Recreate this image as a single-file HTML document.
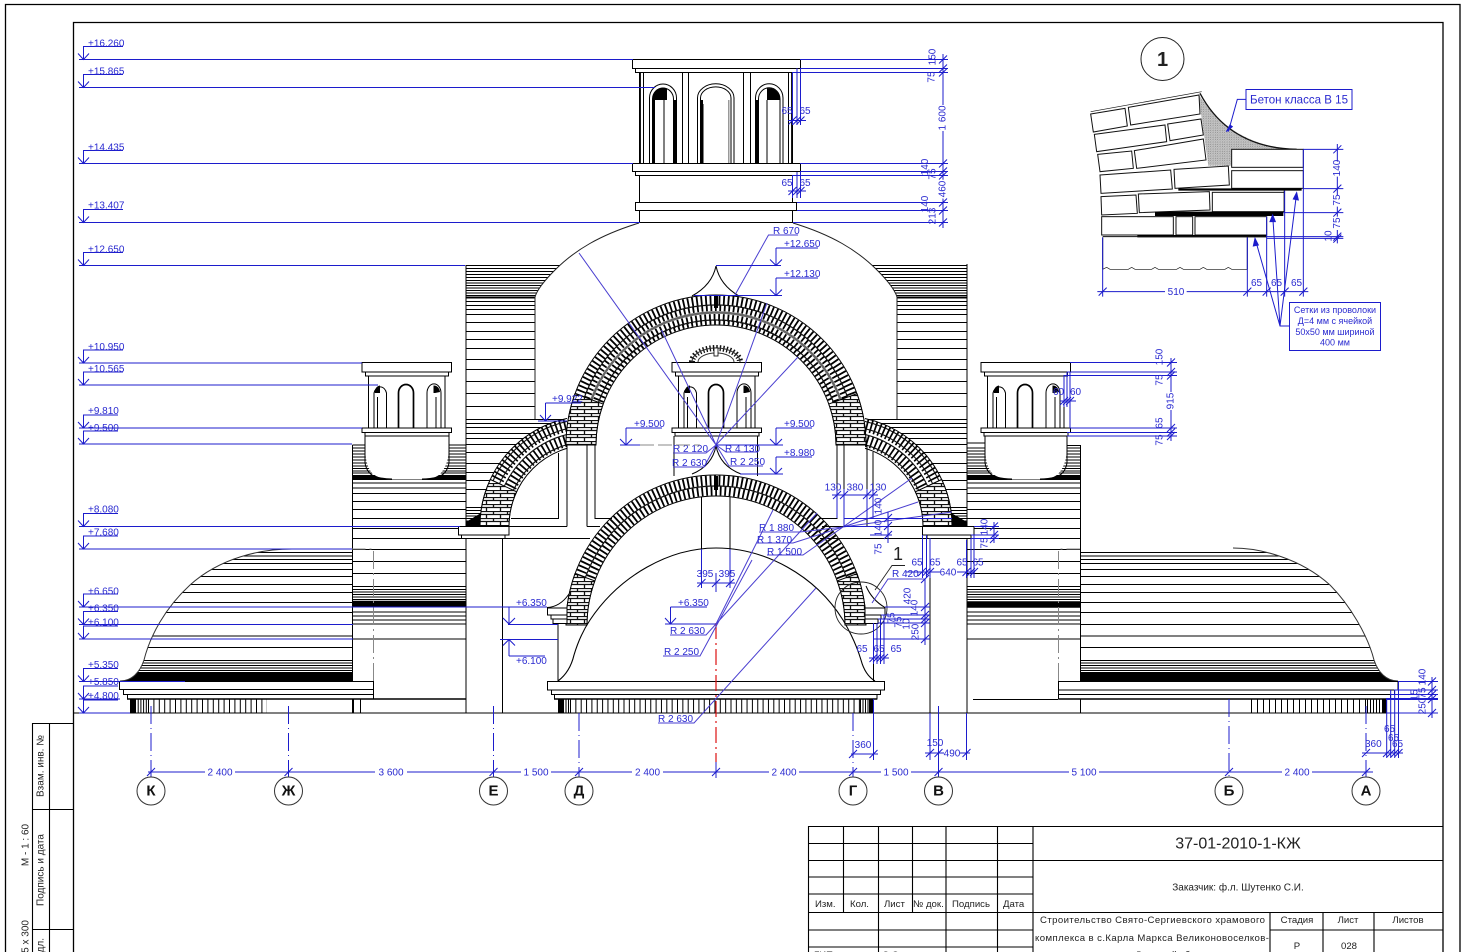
<!DOCTYPE html>
<html><head><meta charset="utf-8"><title>37-01-2010-1-КЖ</title>
<style>
html,body{margin:0;padding:0;background:#fff;overflow:hidden}
svg{display:block}
path,rect,circle,ellipse,line{vector-effect:none}
.k{fill:none;stroke:#000;stroke-width:1}
.w{fill:#fff;stroke:#000;stroke-width:1}
.n{fill:#fff;stroke:none}
.u{fill:none;stroke:#1c1ccc;stroke-width:1}
.v{fill:none;stroke:#4a3fd0;stroke-width:1}
text{font-family:"Liberation Sans",sans-serif}
.t{font-size:10px;fill:#2a2ad0}
.g{font-size:10px;fill:#2a2ad0;paint-order:stroke;stroke:#fff;stroke-width:3px}
.m{text-anchor:middle}
.r{text-anchor:middle;dominant-baseline:central}
.d{font-size:9.6px;fill:#222}
.b{font-weight:bold;font-size:15px;fill:#111;text-anchor:middle;dominant-baseline:central}
</style></head><body>
<svg xmlns="http://www.w3.org/2000/svg" width="1464" height="952" viewBox="0 0 1464 952">
<defs>
<pattern id="bh" width="14" height="7" patternUnits="userSpaceOnUse"><rect width="14" height="7" fill="#fff"/><path d="M0 .5H14M0 3.5H14M3.5 0V3.5M10.5 3.5V7" stroke="#111" stroke-width="1.300" fill="none"/></pattern>
<pattern id="dots" width="7" height="7" patternUnits="userSpaceOnUse"><rect width="7" height="7" fill="#c4c4c4"/><circle cx="2" cy="2" r=".8" fill="#111"/><circle cx="5.500" cy="4" r=".6" fill="#222"/><circle cx="3" cy="6" r=".5" fill="#333"/></pattern>
<clipPath id="dc"><path d="M120 681C132 681 140 672 144 660C150 636 165 608 190 585C220 558 260 549 292 549H352.500V681Z"/><path d="M1398 681C1386 681 1378 672 1374 660C1368 636 1350 605 1330 585C1300 558 1260 548 1233 548H1080.500V681Z"/></clipPath>
<clipPath id="cl"><rect x="400" y="300" width="167" height="226.500"/></clipPath>
<clipPath id="cr"><rect x="865" y="300" width="167" height="226.500"/></clipPath>
<path id="hw" class="k" d="M0 448H114M0 451H114M0 454H114M0 457H114M0 460H114M0 463H114M0 466H114M0 468.500H114M0 471H114M0 473H114M0 483H114M0 488H114M0 493.500H114M0 501.500H114M0 509.500H114M0 518.500H114M0 528.500H114M0 538.500H114M0 549.500H114M0 561.500H114M0 573.500H114M0 586.500H114M0 589.500H114M0 592H114M0 594.500H114M0 597H114M0 599.500H114M0 612H114M0 616H114M0 620H114M0 624H114M0 639H114"/>
<path id="hb" class="k" d="M0 265.500H105M0 268.500H105M0 271.500H105M0 274.500H105M0 277.500H105M0 280.500H105M0 283H105M0 285.500H105M0 288H105M0 290.500H105M0 293H105M0 295.500H105M0 297H105M0 298H105M0 301.500H105M0 305.500H105M0 309.500H105M0 314.500H105M0 322.500H105M0 331.500H105M0 339.500H105M0 348.500H105M0 359.500H105M0 369.500H105M0 381.500H105M0 393.500H105M0 406.500H105M0 419.500H105M0 423.500H105M0 427.500H105M0 433.500H105M0 438.500H105M0 444.500H105M0 452.500H105M0 463.500H105M0 472.500H105M0 480.500H105M0 489.500H105M0 507.500H105M0 510.500H105M0 513.500H105M0 516H105M0 518.500H105M0 521H105"/>
<g id="st">
<path class="w" d="M362 362.500H451.500V372H362Z"/>
<path class="w" d="M365.500 372H448.500V376H365.500Z"/>
<path class="k" d="M368.500 376V428M445 376V428"/>
<path class="k" d="M374 428V393A6.500 8.500 0 0 1 386.500 393V428M377.500 428V397"/>
<path class="k" style="stroke-width:1.700" d="M398.500 428V393A7.500 8.500 0 0 1 413.500 393V428"/>
<path class="k" d="M427 428V393A6.500 8.500 0 0 1 441 393V428M436 428V397"/>
<path d="M374.500 392A6 7.500 0 0 1 380 385.500V393H375Z" fill="#000"/>
<path d="M433.500 385.500A6 7.500 0 0 1 440 392L435 393H433.500Z" fill="#000"/>
<path class="w" d="M362 428H451.500V432.500H362Z"/>
<path class="w" d="M365 432.500H449V436H365Z"/>
</g>
</defs>

<rect width="1464" height="952" fill="#fff"/>
<!-- frames -->
<path d="M5.500 952V4.500H1460V952" fill="none" stroke="#000" stroke-width="1.300"/>
<path d="M73.500 952V22.500H1443V952" fill="none" stroke="#000" stroke-width="1.300"/>

<!-- low domes hatching -->
<g clip-path="url(#dc)">
<path class="k" d="M100 552.500H1420M100 556H1420M100 559.500H1420M100 563.500H1420M100 569.500H1420M100 576.500H1420M100 584.500H1420M100 592.500H1420M100 602.500H1420M100 612.500H1420M100 624.500H1420M100 636H1420M100 647.500H1420M100 660.500H1420M100 663H1420M100 665.500H1420M100 668H1420M100 670.500H1420"/>
<path d="M100 676.500H1420" stroke="#000" stroke-width="9" fill="none"/>
</g>
<path class="k" style="stroke:#333" d="M120 681C132 681 140 672 144 660C150 636 165 608 190 585C220 558 260 549 292 549"/>
<path class="k" style="stroke:#333" d="M1398 681C1386 681 1378 672 1374 660C1368 636 1350 605 1330 585C1300 558 1260 548 1233 548"/>

<!-- wall blocks hatching -->
<use href="#hw" x="352.500"/>
<use href="#hw" x="966.500"/>
<path d="M352.500 604H466.500M966.500 604.500H1080.500" stroke="#000" stroke-width="6.500" fill="none"/>
<path d="M352.500 477.500H466.500M966.500 477.500H1080.500" stroke="#000" stroke-width="5" fill="none"/>
<path class="k" d="M352.500 445H365M449 445H465.500M966.500 443H985M1067 445.500H1080.500"/>
<path class="k" d="M352.500 445V713M1080.500 445V713M466 265V713M967 264V713"/>
<use href="#hb" x="465.500"/>
<g transform="translate(967 0) scale(-1 1)"><use href="#hb"/></g>
<path d="M466 526H481Q482 518 486 510L466 522Z" fill="#000"/>
<path d="M967 526H951Q950 518 946 510L967 522Z" fill="#000"/>

<!-- base slabs side -->
<path class="w" d="M119.500 681.500H373.500V689.500H119.500Z"/>
<path class="w" d="M123.500 689.500H373.500V694.500H123.500Z"/>
<path class="w" d="M127.500 694.500H373.500V699H127.500Z"/>
<path class="w" d="M1058.500 681.500H1398V690H1058.500Z"/>
<path class="w" d="M1058.500 690H1394.500V694.500H1058.500Z"/>
<path class="w" d="M1058.500 694.500H1390.500V699H1058.500Z"/>
<path d="M127 699H466M1058.500 699H1390" stroke="#000" stroke-width="1.400" fill="none"/>
<path d="M973 699.500H1058" class="k"/>
<!-- balusters -->
<path d="M135 706H148" stroke="#000" stroke-width="14" stroke-dasharray="1 1.700" fill="none"/>
<path d="M148 706H267" stroke="#000" stroke-width="14" stroke-dasharray="1 4.400" fill="none"/>
<rect x="130" y="699" width="5" height="14"/>
<path d="M353 699V713M360.500 699V713" class="k"/>
<rect x="352" y="699" width="2" height="14"/>
<path d="M1251 706H1367" stroke="#000" stroke-width="14" stroke-dasharray="1 5" fill="none"/>
<path d="M1367 706H1382" stroke="#000" stroke-width="14" stroke-dasharray="1 2" fill="none"/>
<rect x="1382" y="699" width="5" height="14"/>

<!-- dome white -->
<path class="n" d="M639 223C600 235 575 250 555 270C543 282 537 290 535 297V419H567V713H865V419H897V297C895 290 889 282 877 270C857 250 832 235 793 223Z"/>
<path class="k" style="stroke:#222" d="M639 223C600 235 575 250 555 270C543 282 537 290 535 297V419"/>
<path class="k" style="stroke:#222" d="M793 223C832 235 857 250 877 270C889 282 895 290 897 297V419"/>

<!-- main tower -->
<path class="w" d="M632.500 59.500H800.500V68.500H632.500Z"/>
<path class="w" d="M635.500 68.500H797V72.500H635.500Z"/>
<path class="k" d="M639.500 72.500V163.500M643.500 72.500V163.500M682.500 72.500V163.500M688.500 72.500V163.500M743.500 72.500V163.500M750.500 72.500V163.500M788.500 72.500V163.500M792.500 72.500V163.500"/>
<path d="M640 73V163M792 73V163" stroke="#000" stroke-width="1.800" fill="none"/>
<path class="k" d="M649.500 163.500V98A13.500 14 0 0 1 676.500 98V163.500M652.500 163.500V99A10.500 11 0 0 1 673.500 99V163.500M664 100V163.500"/>
<path d="M652.500 99A10.500 11 0 0 1 667 88.500V100H652.500Z" fill="#000"/>
<path d="M653 100H655V163H653ZM674 100H676V163H674Z" fill="#000"/>
<path class="k" d="M697.500 163.500V98A18 14 0 0 1 734 98V163.500M700.500 163.500V98A15 11 0 0 1 731 98V163.500M703 163.500V104"/>
<path d="M701 100H703V163.500H701Z" fill="#000"/>
<path d="M728 100H729.500V163.500H728Z" fill="#999"/>
<path class="k" d="M755.500 163.500V98A13.500 14 0 0 1 783 98V163.500M758.500 163.500V99A10.500 11 0 0 1 780 99V163.500M767 100V163.500"/>
<path d="M767 88.500A10.500 11 0 0 1 780 99V100H767Z" fill="#000"/>
<path d="M756 100H758.500V163H756Z" fill="#000"/>
<path class="w" d="M632.500 163.500H800.500V171.500H632.500Z"/>
<path class="w" d="M635.500 171.500H797V175.500H635.500Z"/>
<path class="k" d="M639.500 175.500V202M792.500 175.500V202"/>
<path class="w" d="M635.500 202.500H796.500V210.500H635.500Z"/>
<path class="k" d="M639.500 210.500V222.500H792.500V210.500"/>

<!-- side arch white -->
<g clip-path="url(#cl)">
<path d="M480 526.500A110 110 0 0 1 700 526.500Z" fill="#fff"/>
<path d="M480 526A110 110 0 0 1 700 526" class="k"/>
<path d="M509 526A81 81 0 0 1 671 526" class="k"/>
<path d="M486.500 526A103.500 103.500 0 0 1 693.500 526" fill="none" stroke="#000" stroke-width="13" stroke-dasharray="1.700 2.700"/>
<path d="M501.500 526A88.500 88.500 0 0 1 678.500 526" fill="none" stroke="#000" stroke-width="12" stroke-dasharray="1.700 2.800"/>
<path d="M483 526A107 107 0 0 1 697 526M490 526A100 100 0 0 1 690 526M495.500 526A94.500 94.500 0 0 1 684.500 526M505.500 526A84.500 84.500 0 0 1 674.500 526" fill="none" stroke="#111" stroke-width="1.100"/>
<path d="M480 526A110 110 0 0 1 490.300 479.500L516.600 491.800A81 81 0 0 0 509 526Z" fill="url(#bh)" stroke="#000"/>
</g>
<g clip-path="url(#cr)">
<path d="M952 526.500A110 110 0 0 0 732 526.500Z" fill="#fff"/>
<path d="M952 526A110 110 0 0 0 732 526" class="k"/>
<path d="M923 526A81 81 0 0 0 761 526" class="k"/>
<path d="M945.500 526A103.500 103.500 0 0 0 738.500 526" fill="none" stroke="#000" stroke-width="13" stroke-dasharray="1.700 2.700"/>
<path d="M930.500 526A88.500 88.500 0 0 0 753.500 526" fill="none" stroke="#000" stroke-width="12" stroke-dasharray="1.700 2.800"/>
<path d="M949 526A107 107 0 0 0 735 526M942 526A100 100 0 0 0 742 526M936.500 526A94.500 94.500 0 0 0 747.500 526M926.500 526A84.500 84.500 0 0 0 757.500 526" fill="none" stroke="#111" stroke-width="1.100"/>
<path d="M952 526A110 110 0 0 0 941.700 479.500L915.400 491.800A81 81 0 0 1 923 526Z" fill="url(#bh)" stroke="#000"/>
</g>

<!-- upper arch -->
<path d="M566 445A150 150 0 0 1 866 445Z" fill="#fff"/>
<use href="#st" x="310"/>
<path class="k" d="M674 436V476M757.500 436V476"/>
<path class="k" d="M716 446Q712 466 692 474M716 446Q720 466 741 474"/>
<path d="M692 362A24 14 0 0 1 740 362" fill="none" stroke="#111" stroke-width="6" stroke-dasharray="1.400 2"/>
<path d="M692 362A24 14 0 0 1 740 362M698 362A18 9 0 0 1 734 362" class="k" style="stroke:#333"/>
<rect x="714" y="348" width="4" height="8" fill="#fff" stroke="#000" stroke-width=".8"/>
<path d="M566 445A150 150 0 0 1 866 445" class="k"/>
<path d="M596 445A120 120 0 0 1 836 445" class="k"/>
<path d="M571.500 445A144.500 144.500 0 0 1 860.500 445" fill="none" stroke="#000" stroke-width="10" stroke-dasharray="1.800 2.700"/>
<path d="M579 445A137 137 0 0 1 853 445" fill="none" stroke="#000" stroke-width="6" stroke-dasharray="1.800 2.700" stroke-dashoffset="2"/>
<path d="M588.500 445A127.500 127.500 0 0 1 843.500 445" fill="none" stroke="#000" stroke-width="7" stroke-dasharray="1.800 2.800"/>
<path d="M593 445A123 123 0 0 1 839 445" fill="none" stroke="#000" stroke-width="5" stroke-dasharray="1.800 2.800" stroke-dashoffset="2"/>
<path d="M576 445A140 140 0 0 1 856 445" fill="none" stroke="#111" stroke-width="1.200"/>
<path d="M583.500 445A132.500 132.500 0 0 1 848.500 445" fill="none" stroke="#666" stroke-width="2.400"/>
<path d="M591 445A125 125 0 0 1 841 445" fill="none" stroke="#111" stroke-width="1.200"/>
<path d="M566 445A150 150 0 0 1 575 393.700L603.200 404A120 120 0 0 0 596 445Z" fill="url(#bh)" stroke="#000"/>
<path d="M866 445A150 150 0 0 0 857 393.700L828.800 404A120 120 0 0 1 836 445Z" fill="url(#bh)" stroke="#000"/>
<path d="M714 296H718V308H714Z" fill="#000"/>
<path class="k" d="M716 266Q712 285 692 296M716 266Q720 285 739 296"/>

<!-- left cornice, windows -->
<path class="w" d="M458.500 526.500H509V535H458.500Z"/>
<path class="w" d="M461.500 535H505V538.500H461.500Z"/>
<path class="k" d="M502.500 538.500V713M505 538.500H590M509 526.500H567M587 526.500H600"/>
<path class="k" d="M558.500 453V518.500H511M567 445V526.500M587 445V526.500M595 445V518.500H612"/>
<path class="w" d="M922.500 526.500H974V535H922.500Z"/>
<path class="w" d="M927 535H971V538.500H927Z"/>
<path class="k" d="M837 445V518.500H820M844 445V526.500H822M867 445V526.500H922M873 452V518.500H920M927 538.500H820"/>
<path class="k" d="M930 538.500V713"/>
<path class="k" d="M701.500 497V549M730 497V549"/>

<!-- lower dome -->
<path class="n" d="M558 681Q570 672 574 655Q580 635 590 620C620 575 670 548 716 548C765 548 815 575 843 620Q855 640 861 660Q865 675 875 681Z"/>
<path class="k" style="stroke-width:1.100" d="M558 681Q570 672 574 655Q580 635 590 620C620 575 670 548 716 548C765 548 815 575 843 620Q855 640 861 660Q865 675 875 681"/>
<path class="k" d="M558 623V681M873.500 623V681"/>
<!-- lower arch -->
<path d="M566 625A150 150 0 0 1 866 625" class="k"/>
<path d="M587 625A129 129 0 0 1 845 625" class="k"/>
<path d="M571.500 625A144.500 144.500 0 0 1 860.500 625" fill="none" stroke="#000" stroke-width="10" stroke-dasharray="1.800 2.700"/>
<path d="M582 625A134 134 0 0 1 850 625" fill="none" stroke="#000" stroke-width="9" stroke-dasharray="1.800 2.800" stroke-dashoffset="2"/>
<path d="M577 625A139 139 0 0 1 855 625" fill="none" stroke="#111" stroke-width="1.200"/>
<path d="M566 625A150 150 0 0 1 575 573.700L594.800 580.900A129 129 0 0 0 587 625Z" fill="url(#bh)" stroke="#000"/>
<path d="M866 625A150 150 0 0 0 857 573.700L837.200 580.900A129 129 0 0 1 845 625Z" fill="url(#bh)" stroke="#000"/>
<path d="M714 476H718V490H714Z" fill="#000"/>
<!-- shoulders -->
<path class="k" d="M547 607.500Q560 607 569 594M866 586Q872 600 885 607.500"/>
<path class="w" d="M547.500 608H567V615H547.500Z"/>
<path class="w" d="M551 615H567V619H551Z"/>
<path class="w" d="M553 619H567V623.500H553Z"/>
<path class="w" d="M865 608H885V615H865Z"/>
<path class="w" d="M865 615H881V619H865Z"/>
<path class="w" d="M865 619H878V623.500H865Z"/>
<!-- base central -->
<path class="w" d="M547.500 681.500H884.500V690H547.500Z"/>
<path class="w" d="M551.500 690H880.500V694.500H551.500Z"/>
<path class="w" d="M554.500 694.500H877V699H554.500Z"/>
<path d="M554 699H877" stroke="#000" stroke-width="1.400" fill="none"/>
<path d="M563 706H570" stroke="#000" stroke-width="14" stroke-dasharray="1 1.500" fill="none"/>
<path d="M570 706H860" stroke="#000" stroke-width="14" stroke-dasharray="1 4.350" fill="none"/>
<path d="M860 706H869" stroke="#000" stroke-width="14" stroke-dasharray="1 1.500" fill="none"/>
<rect x="558" y="699" width="5" height="14"/><rect x="869" y="699" width="4" height="14"/>

<!-- small towers + bowls -->
<path class="n" d="M365 436H449V445Q449 465 440 474Q435 479 422 479.500H392Q378 479 372 473Q365 465 365 445Z"/>
<path class="k" d="M365 436V463Q367 474 376 477Q384 479 392 479M449 436V463Q447 474 438 477Q430 479 422 479"/>
<use href="#st"/>
<path class="n" d="M985 436H1067V445Q1067 465 1058 474Q1053 479 1040 479.500H1012Q998 479 992 473Q985 465 985 445Z"/>
<path class="k" d="M985 436V463Q987 474 996 477Q1004 479 1012 479M1067 436V463Q1065 474 1056 477Q1048 479 1040 479"/>
<use href="#st" x="619"/>
<path class="k" d="M73.500 713H1387"/>

<!-- gray dashed -->
<path d="M1058.500 681V549H1080" fill="none" stroke="#888" stroke-dasharray="18 4 2 4"/>
<path d="M373.500 681V549H352" fill="none" stroke="#888" stroke-dasharray="18 4 2 4"/>

<!-- red axis -->
<path d="M716 623V762" fill="none" stroke="#d11" stroke-width="1.200" stroke-dasharray="16 4 2 4"/>
<path d="M716 762V778" class="u"/>

<!-- level lines -->
<path class="u" d="M79 59.500H633M79 87.500H655M79 163.500H633M79 222.500H640M79 265.500H465M79 363H362M79 385H378M79 428H362M79 444H352M79 526.500H460M79 549H352M79 607H547M79 624.500H353M79 639H353M79 681.500H185M79 699H120M79 713H130"/>
<path class="u" d="M508 624.500H558M500 639.500H558"/>
<!-- level markers -->
<path class="u" d="M78 53.500L83.500 59.500L89 53.500M83.500 59.500V46.500H123M78 81.500L83.500 87.500L89 81.500M83.500 87.500V74.500H123M78 157.500L83.500 163.500L89 157.500M83.500 163.500V150.500H123M78 216.500L83.500 222.500L89 216.500M83.500 222.500V209.500H123M78 259.500L83.500 265.500L89 259.500M83.500 265.500V252.500H123"/>
<path class="u" d="M78 357L83.500 363L89 357M83.500 363V350H123M78 379L83.500 385L89 379M83.500 385V372H123M78 422L83.500 428L89 422M83.500 428V415H118M78 438L83.500 444L89 438M83.500 444V431H118M78 520.500L83.500 526.500L89 520.500M83.500 526.500V513.500H118M78 543L83.500 549L89 543M83.500 549V536H118M78 601L83.500 607L89 601M83.500 607V594H118M78 618.500L83.500 624.500L89 618.500M83.500 624.500V611.500H118M78 633L83.500 639L89 633M83.500 639V626H118M78 675.500L83.500 681.500L89 675.500M83.500 681.500V668.500H118M78 693L83.500 699L89 693M83.500 699V686H118M78 707L83.500 713L89 707M83.500 713V700H118"/>
<g class="t">
<text x="88" y="46.500">+16.260</text><text x="88" y="74.500">+15.865</text><text x="88" y="150.500">+14.435</text><text x="88" y="208.500">+13.407</text><text x="88" y="252.500">+12.650</text><text x="88" y="350">+10.950</text><text x="88" y="372">+10.565</text><text x="88" y="414">+9.810</text><text x="88" y="431">+9.500</text><text x="88" y="512.500">+8.080</text><text x="88" y="535.500">+7.680</text><text x="88" y="594.500">+6.650</text><text x="88" y="611.500">+6.350</text><text x="88" y="625.500">+6.100</text><text x="88" y="668">+5.350</text><text x="88" y="685">+5.850</text><text x="88" y="699">+4.800</text>
</g>

<!-- right dims top -->
<path class="u" d="M800 59.500H948M800 68.500H948M792 72.500H948M800 163.500H948M800 171.500H948M792 175.500H948M797 202.500H948M797 210.500H948M793 222.500H948"/>
<path class="u" d="M943 54V105M943 131V228"/>
<path class="u" d="M939 63.500l8-8M939 72.500l8-8M939 76.500l8-8M939 167.500l8-8M939 175.500l8-8M939 179.500l8-8M939 206.500l8-8M939 214.500l8-8M939 226.500l8-8"/>
<g class="t r">
<text class="r" transform="rotate(-90 933 57)" x="933" y="57">150</text>
<text class="r" transform="rotate(-90 932 77)" x="932" y="77">75</text>
<text class="r" transform="rotate(-90 943 118)" x="943" y="118">1 600</text>
<text class="r" transform="rotate(-90 925.500 167)" x="925.500" y="167">140</text>
<text class="r" transform="rotate(-90 933 174)" x="933" y="174">75</text>
<text class="r g" transform="rotate(-90 943 189)" x="943" y="189">460</text>
<text class="r" transform="rotate(-90 925.500 204)" x="925.500" y="204">140</text>
<text class="r" transform="rotate(-90 933 216)" x="933" y="216">213</text>
</g>
<path class="u" d="M792.500 72V125M797 68V125M800.500 68V125M788 120.500H806M788.500 124.500l8-8M793 124.500l8-8M796.500 124.500l8-8"/>
<path class="u" d="M792.500 176V198M797 172V198M800.500 172V198M788 191H806M788.500 195l8-8M793 195l8-8M796.500 195l8-8"/>
<g class="t m"><text x="787" y="114">65</text><text x="805" y="114">65</text><text x="787" y="186">65</text><text x="805" y="186">65</text></g>

<!-- centre leaders -->
<path class="v" d="M798 235H768.500L735 295M579 253L716 445M716 445L767 303M716 445L798 357M716 445L661.500 330M673 453H706L716 445M673 467H704L716 445M716 445L726 452H758M716 445L729 466H763"/>
<g class="t">
<text x="773" y="234">R 670</text>
<text x="673" y="452">R 2 120</text><text x="672" y="466">R 2 630</text>
<text x="725" y="452">R 4 130</text><text x="730" y="465">R 2 250</text>
</g>
<path class="u" d="M694 295.500H782M716 265.500H781M776 248V265M776 278V295M770 259.500L776 265.500L782 259.500M770 289.500L776 295.500L782 289.500M776 248H818M776 278H818"/>
<g class="t"><text x="784" y="247">+12.650</text><text x="784" y="277">+12.130</text></g>
<path class="u" d="M626 428V445M620 439L626 445L632 439M626 428H662M620 445H640"/>
<path d="M640 445H700" stroke="#888" stroke-dasharray="14 4" fill="none"/>
<path class="u" d="M716 445H783M776 428V445M770 439L776 445L782 439M776 428H812M740 474H783M776 457V474M770 468L776 474L782 468M776 457H812"/>
<g class="t"><text x="634" y="427">+9.500</text><text x="784" y="427">+9.500</text><text x="784" y="456">+8.980</text></g>
<path class="u" d="M538 421H567M545.500 403V421M540 415L545.500 421L551 415M545.500 403H581"/>
<text class="t" x="552" y="402">+9.922</text>

<!-- lower centre dims -->
<path class="u" d="M665 624H716M670.500 607V624M665 618L670.500 624L676 618M670.500 607H707"/>
<text class="t" x="678" y="606">+6.350</text>
<path class="v" d="M670 635H706L716 624M663 656H700L752 560M658 723H694L816 588M716 624L773 510M716 624L817 513"/>
<g class="t"><text x="670" y="634">R 2 630</text><text x="664" y="655">R 2 250</text><text x="658" y="722">R 2 630</text></g>
<path class="u" d="M701.500 549V588M730 549V588M716 573V592M697 583H735M697.500 587l8-8M712 587l8-8M726 587l8-8"/>
<g class="t m"><text x="705" y="577">395</text><text x="727" y="577">395</text></g>
<!-- left +6.350 -->
<path class="u" d="M509 607V624M503 618L509 624L515 618M509 639.500V656M503 645.500L509 639.500L515 645.500M509 656H545"/>
<g class="t"><text x="516" y="606">+6.350</text><text x="516" y="664">+6.100</text></g>

<!-- right of arch dims -->
<path class="v" d="M843 527L912 478M843 527L918 502M843 527L952 512M843 527L800 532H759M843 527L793 543H757M843 527L803 555H767"/>
<g class="t"><text x="759" y="531">R 1 880</text><text x="757" y="543">R 1 370</text><text x="767" y="555">R 1 500</text></g>
<path class="u" d="M832 495H878M833 499l8-8M840 499l8-8M863 499l8-8M869 499l8-8M837 489V518M844 489V527M867 489V518M873 489V518"/>
<g class="t m"><text x="833" y="490.500">130</text><text x="855" y="490.500">380</text><text x="878" y="490.500">130</text></g>
<path class="u" d="M844 518.500H952M844 526.500H890M870 535H892M888 512V543M884 522l8-8M884 530l8-8M884 539l8-8"/>
<g class="t">
<text class="r" transform="rotate(-90 879 506)" x="879" y="506">140</text>
<text class="r" transform="rotate(-90 879 528)" x="879" y="528">140</text>
<text class="r" transform="rotate(-90 879 549)" x="879" y="549">75</text>
<text class="r" transform="rotate(-90 985 527)" x="985" y="527">140</text>
<text class="r" transform="rotate(-90 985 543)" x="985" y="543">75</text>
</g>
<path class="u" d="M974 526.500H999M971 535H999M971 538.500H999M994 522V543M990 530.500l8-8M990 539l8-8M990 543l8-8"/>
<text x="898" y="560" style="font-size:18px;fill:#222" class="m">1</text>
<path d="M905 565.500H892L875 590" fill="none" stroke="#222" stroke-width=".9"/>
<circle cx="861" cy="608" r="26" fill="none" stroke="#222" stroke-width=".9"/>
<path class="v" d="M925 579H888L872 603"/>
<text class="t" x="892" y="577">R 420</text>
<path class="u" d="M922.500 535V578M926.500 535V578M930 538V578M906 572H940M957 572H975M918 576l8-8M922.500 576l8-8M926 576l8-8M962.500 576l8-8M967 576l8-8M970 576l8-8M966.500 540V578M971 538V578M974 535V578"/>
<g class="t m"><text x="917" y="565.500">65</text><text x="935" y="565.500">65</text><text class="t m" x="948" y="575.500">640</text><text x="962" y="565.500">65</text><text x="978" y="565.500">65</text></g>
<path class="u" d="M925 579V645M885 607H930M881 615H930M878 619H930M878 623H930M873 639H930M921 583l8-8M921 611l8-8M921 619l8-8M921 623l8-8M921 627l8-8M921 643l8-8"/>
<g class="t">
<text class="r" transform="rotate(-90 908 596)" x="908" y="596">420</text>
<text class="r" transform="rotate(-90 915 608)" x="915" y="608">140</text>
<text class="r" transform="rotate(-90 916 632)" x="916" y="632">250</text>
<text class="r" transform="rotate(-90 892 618)" x="892" y="618">75</text>
<text class="r" transform="rotate(-90 899 622)" x="899" y="622">75</text>
<text class="r" transform="rotate(-90 907 624)" x="907" y="624">10</text>
</g>
<path class="u" d="M873.500 623V664M877 623V664M880.500 619V664M884 615V664M869 658H889M869.500 662l8-8M873 662l8-8M876.500 662l8-8M880 662l8-8"/>
<g class="t m"><text x="862" y="652">65</text><text x="879" y="652">65</text><text x="896" y="652">65</text></g>

<!-- right tower dims -->
<path class="u" d="M1070 362.500H1177M1067 372H1177M1064 375.500H1177M1070 381V428M1070 428H1177M1067 432.500H1177M1067 436H1177"/>
<path class="u" d="M1171 358V392M1171 410V441M1167 366.500l8-8M1167 376l8-8M1167 379.500l8-8M1167 432l8-8M1167 436.500l8-8M1167 440l8-8"/>
<path class="u" d="M1064 375V407M1067 372V407M1070 372V407M1060 401H1076M1060 405l8-8M1063 405l8-8M1066 405l8-8"/>
<g class="t">
<text class="r" transform="rotate(-90 1160 357)" x="1160" y="357">150</text>
<text class="r" transform="rotate(-90 1160 380)" x="1160" y="380">75</text>
<text class="r" transform="rotate(-90 1171 401)" x="1171" y="401">915</text>
<text class="r" transform="rotate(-90 1160 423)" x="1160" y="423">65</text>
<text class="r" transform="rotate(-90 1160 440)" x="1160" y="440">75</text>
<text x="1053" y="395">60</text><text x="1070" y="395">60</text>
</g>

<!-- axes -->
<path class="u" style="stroke-dasharray:18 4 1 4" d="M151 706V778M288.500 706V778M493.500 706V778M579 713V778M853 713V778M1229 699V778M1366 706V778"/>
<path class="u" d="M938.500 706V778M148 772H205M235 772H375M407 772H521M551 772H632M663 772H769M799 772H881M911 772H1069M1099 772H1282M1312 772H1373"/>
<path class="u" d="M147 776l8-8M284.500 776l8-8M489.500 776l8-8M575 776l8-8M712 776l8-8M849 776l8-8M934.500 776l8-8M1225 776l8-8M1362 776l8-8"/>
<g class="t m"><text x="220" y="775.500">2 400</text><text x="391" y="775.500">3 600</text><text x="536" y="775.500">1 500</text><text x="647.500" y="775.500">2 400</text><text x="784" y="775.500">2 400</text><text x="896" y="775.500">1 500</text><text x="1084" y="775.500">5 100</text><text x="1297" y="775.500">2 400</text></g>
<path class="u" d="M873.500 699V760M851 754H878M849 758l8-8M869.500 758l8-8M930 713V760M966.500 713V760M925 753H944M960 753H970M926 757l8-8M934.500 757l8-8M962.500 757l8-8"/>
<g class="t m"><text x="863" y="748">360</text><text x="935" y="746">150</text><text x="952" y="756.500">490</text></g>
<g fill="#fff" stroke="#333" stroke-width="1">
<circle cx="151" cy="791" r="14"/><circle cx="288.500" cy="791" r="14"/><circle cx="493.500" cy="791" r="14"/><circle cx="579" cy="791" r="14"/><circle cx="853" cy="791" r="14"/><circle cx="938.500" cy="791" r="14"/><circle cx="1229" cy="791" r="14"/><circle cx="1366" cy="791" r="14"/>
</g>
<g class="b"><text class="b" x="151" y="791">К</text><text class="b" x="288.500" y="791">Ж</text><text class="b" x="493.500" y="791">Е</text><text class="b" x="579" y="791">Д</text><text class="b" x="853" y="791">Г</text><text class="b" x="938.500" y="791">В</text><text class="b" x="1229" y="791">Б</text><text class="b" x="1366" y="791">А</text></g>

<!-- far right dims -->
<path class="u" d="M1398 681.500H1438M1394 690H1438M1390 694.500H1438M1387 713H1438M1432 677V718M1428 685.500l8-8M1428 694l8-8M1428 698.500l8-8M1428 703l8-8M1428 717l8-8M1386.700 699V758M1390.700 690V758M1394.700 690V758M1398.500 681V758M1362 753H1403M1362 757l8-8M1383 757l8-8M1387 757l8-8M1391 757l8-8M1394.500 757l8-8"/>
<path d="M1386 699H1438" stroke="#1c1ccc" stroke-width="2" fill="none"/>
<g class="t">
<text class="r" transform="rotate(-90 1423 677)" x="1423" y="677">140</text>
<text class="r" transform="rotate(-90 1415 695)" x="1415" y="695">15</text>
<text class="r" transform="rotate(-90 1423 693)" x="1423" y="693">75</text>
<text class="r" transform="rotate(-90 1423 706)" x="1423" y="706">250</text>
<text x="1365" y="747">360</text><text x="1384" y="732">65</text><text x="1388" y="741">65</text><text x="1392" y="747">65</text>
</g>

<!-- detail 1 -->
<circle cx="1162.500" cy="59" r="21.500" fill="#fff" stroke="#222" stroke-width="1"/>
<text x="1162.500" y="60" style="font-size:20px;font-weight:bold;fill:#222" class="r">1</text>
<g transform="translate(1000 20) scale(.33333)" fill="#fff" stroke="#111" stroke-width="3">
<path d="M595 222C640 290 720 380 890 388H695V437H625Z" fill="url(#dots)" stroke="none" transform="translate(0 0)"/>
<path d="M600 220C640 295 720 385 890 388" fill="none" stroke-width="4"/>
<path d="M272 275L605 215" fill="none" stroke-width="2"/>
<path d="M272 282L375 265L382 318L280 336Z"/><path d="M385 262L597 225L600 282L392 315Z"/>
<path d="M283 343L495 315L500 365L290 395Z"/><path d="M503 312L603 297L610 345L510 362Z"/>
<path d="M293 403L395 393L400 445L300 455Z"/><path d="M403 392L610 357L618 420L410 445Z"/>
<path d="M300 465L512 450L517 507L303 520Z"/><path d="M522 448L685 438L688 495L525 505Z"/>
<path d="M303 530L408 525L412 580L305 585Z"/><path d="M415 522L628 515L630 570L418 578Z"/>
<rect x="695" y="388" width="215" height="54"/><rect x="695" y="452" width="215" height="53"/>
<rect x="637" y="517" width="216" height="58"/>
<rect x="305" y="590" width="215" height="55"/><rect x="528" y="590" width="50" height="55"/><rect x="585" y="590" width="215" height="55"/>
<path d="M535 505H905V512H535ZM465 575H850V588H465ZM412 645H800V652H412Z" fill="#000" stroke="none"/>
<path d="M853 512V575" fill="none" stroke-width="4"/>
<path d="M308 650H800M308 652V748M742 652V748" fill="none"/>
<path d="M308 748L320 742L330 748H385L395 742L405 748H455L465 742L475 748H530L540 742L550 748H600L610 742L620 748H675L685 742L695 748H742" fill="none" stroke-width="2"/>
</g>
<g transform="translate(1000 20) scale(.33333)" fill="none" stroke="#1c1ccc" stroke-width="3">
<path d="M910 388H1030M910 506H1030M850 578H1030M800 650H1030M800 655H1030"/>
<path d="M1012 372V425M1012 470V525M1012 560V590M1012 630V670"/>
<path d="M1000 400l24-24M1000 518l24-24M1000 590l24-24M1000 662l24-24M1000 668l24-24"/>
<path d="M910 388V830M854 512V830M800 590V830M742 652V830M308 652V830"/>
<path d="M292 815H495M560 815H925"/>
<path d="M296 827l24-24M730 827l24-24M788 827l24-24M842 827l24-24M898 827l24-24"/>
<path d="M738 238H712L685 335"/>
<path d="M868 918H840L765 655M840 918L818 585M840 918L890 518"/>
<path d="M679 335L690 315L697 320ZM765 655L760 678L775 675ZM818 585L810 605L826 605ZM890 518L880 537L895 540Z" fill="#1c1ccc"/>
</g>
<rect x="1246" y="89.500" width="106" height="20" fill="#fff" stroke="#1c1ccc"/>
<text x="1250" y="103.500" textLength="98" lengthAdjust="spacingAndGlyphs" style="font-size:12px;fill:#2a2ad0">Бетон класса В 15</text>
<rect x="1289.500" y="302.500" width="91" height="48" fill="#fff" stroke="#1c1ccc"/>
<g class="m" style="font-size:9px;fill:#2a2ad0"><text x="1335" y="313">Сетки из проволоки</text><text x="1335" y="324">Д=4 мм с ячейкой</text><text x="1335" y="335">50х50 мм шириной</text><text x="1335" y="345.500">400 мм</text></g>
<g class="t">
<text class="r" transform="rotate(-90 1337.500 168)" x="1337.500" y="168">140</text>
<text class="r" transform="rotate(-90 1337.500 200)" x="1337.500" y="200">75</text>
<text class="r" transform="rotate(-90 1337.500 223)" x="1337.500" y="223">75</text>
<text class="r" transform="rotate(-90 1329 236)" x="1329" y="236">10</text>
<text class="m" x="1176" y="295">510</text><text class="m" x="1256.500" y="286">65</text><text class="m" x="1276.500" y="286">65</text><text class="m" x="1296.500" y="286">65</text>
</g>

<!-- title block -->
<g fill="none" stroke="#000" stroke-width="1.100">
<path d="M808.500 952V826.500H1443M808.500 843.500H1033M808.500 860.500H1443M808.500 877H1033M808.500 894H1033M808.500 912.500H1443M808.500 930H1033M808.500 947H1033M1270 930H1443"/>
<path d="M843.500 826.500V912.500M878.500 826.500V952M912.500 826.500V912.500M946 826.500V952M997.500 826.500V952M1033 826.500V952M1270 912.500V952M1323 912.500V952M1374 912.500V952"/>
</g>
<g style="font-size:9.600px;fill:#222">
<text x="815" y="907">Изм.</text><text x="850" y="907">Кол.</text><text x="884" y="907">Лист</text><text x="913" y="907">№ док.</text><text x="952" y="907">Подпись</text><text x="1003" y="907">Дата</text>
<text x="1040" y="923" textLength="225">Строительство Свято-Сергиевского храмового</text>
<text x="1035" y="941" textLength="234">комплекса в с.Карла Маркса Великоновоселков-</text>
<text x="1135" y="958" textLength="60">Донецкой обл</text>
<text class="m" x="1297" y="923">Стадия</text><text class="m" x="1348" y="923">Лист</text><text class="m" x="1408" y="923">Листов</text>
<text class="m" x="1297" y="949">Р</text><text class="m" x="1349" y="949">028</text>
<text x="814" y="958">ГИП</text><text x="882" y="958">С.С</text>
<text class="m" x="1238" y="890.500" style="font-size:10px">Заказчик: ф.л. Шутенко С.И.</text>
</g>
<text class="m" x="1238" y="848.500" style="font-size:16px;fill:#222">37-01-2010-1-КЖ</text>

<!-- left strip -->
<g fill="none" stroke="#000" stroke-width="1.100"><path d="M32.500 952V723.500H73.500M49.500 723.500V952M32.500 809.500H73.500M32.500 929.500H73.500"/></g>
<g style="font-size:10px;fill:#222">
<text class="r" transform="rotate(-90 41 766)" x="41" y="766">Взам. инв. №</text>
<text class="r" transform="rotate(-90 41 870)" x="41" y="870">Подпись и дата</text>
<text class="r" transform="rotate(-90 26 845)" x="26" y="845">М - 1 : 60</text>
<text transform="rotate(-90 26 920)" x="26" y="920" text-anchor="end" dominant-baseline="central">1975 x 300</text>
<text transform="rotate(-90 41 938)" x="41" y="938" text-anchor="end" dominant-baseline="central">Инв. № подл.</text>
</g>
</svg>
</body></html>
